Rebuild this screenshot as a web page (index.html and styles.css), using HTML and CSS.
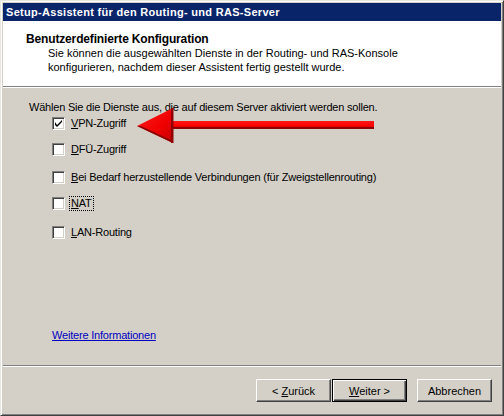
FILE: index.html
```html
<!DOCTYPE html>
<html lang="de">
<head>
<meta charset="utf-8">
<link rel="stylesheet" href="styles.css">
<title>Setup-Assistent</title>
</head>
<body>
<div class="window">
  <div class="titlebar">Setup-Assistent für den Routing- und RAS-Server</div>
  <div class="header">
    <div class="h-title">Benutzerdefinierte Konfiguration</div>
    <div class="h-desc">Sie können die ausgewählten Dienste in der Routing- und RAS-Konsole<br>konfigurieren, nachdem dieser Assistent fertig gestellt wurde.</div>
  </div>
  <div class="content">
    <div class="intro">Wählen Sie die Dienste aus, die auf diesem Server aktiviert werden sollen.</div>
    <div class="options">
      <div class="opt opt-vpn"><span class="cb checked"><svg viewBox="0 0 7 7" width="7" height="7"><path d="M0 2v3l2 2l5-5v-2l-5 5z" fill="#000"/></svg></span><span class="lbl"><u>V</u>PN-Zugriff</span></div>
      <div class="opt opt-dfu"><span class="cb"></span><span class="lbl"><u>D</u>FÜ-Zugriff</span></div>
      <div class="opt opt-bed"><span class="cb"></span><span class="lbl"><u>B</u>ei Bedarf herzustellende Verbindungen (für Zweigstellenrouting)</span></div>
      <div class="opt opt-nat"><span class="cb"></span><span class="lbl focus"><u>N</u>AT</span></div>
      <div class="opt opt-lan"><span class="cb"></span><span class="lbl"><u>L</u>AN-Routing</span></div>
    </div>
    <a class="more" href="#">Weitere Informationen</a>
    <svg class="arrow" width="240" height="40" viewBox="0 0 240 40">
      <defs>
        <linearGradient id="shaft" x1="0" y1="0" x2="0" y2="1">
          <stop offset="0" stop-color="#ff1a1a"/>
          <stop offset="0.6" stop-color="#ff0000"/>
          <stop offset="1" stop-color="#a00000"/>
        </linearGradient>
        <linearGradient id="head" x1="0" y1="0" x2="1" y2="1">
          <stop offset="0" stop-color="#ff2020"/>
          <stop offset="0.6" stop-color="#f00000"/>
          <stop offset="1" stop-color="#c00000"/>
        </linearGradient>
      </defs>
      <rect x="34" y="13" width="203" height="8" fill="url(#shaft)"/>
      <rect x="34" y="19" width="203" height="2" fill="#900000"/>
      <polygon points="0,18 36,0 36,35" fill="url(#head)"/>
      <polygon points="0,18 36,35 36,33 4,18" fill="#8a0000"/>
      <rect x="34" y="0" width="2.5" height="35" fill="#900000"/>
    </svg>
  </div>
  <div class="footer">
    <button class="btn"><span>&lt; <u>Z</u>urück</span></button>
    <button class="btn default"><span><u>W</u>eiter &gt;</span></button>
    <button class="btn cancel"><span>Abbrechen</span></button>
  </div>
</div>
</body>
</html>
```
FILE: styles.css
```css
* { box-sizing: border-box; }
html, body { margin: 0; padding: 0; background: #d4d0c8; }
body {
  font-family: "Liberation Sans", Arial, sans-serif;
  font-size: 11px;
  color: #000;
}
.window {
  width: 504px;
  height: 416px;
  display: flex;
  flex-direction: column;
  background: #d4d0c8;
  border: 1px solid;
  border-color: #e8e6e0 #404040 #404040 #e8e6e0;
  padding: 2px;
  box-shadow: inset 1px 1px 0 #fff, inset -1px -1px 0 #808080;
}
.titlebar {
  height: 18px;
  background: #0a246a;
  color: #fff;
  font-weight: bold;
  font-size: 11px;
  letter-spacing: 0.3px;
  line-height: 18px;
  padding-left: 3px;
  flex: none;
}
.header {
  height: 66px;
  background: #fff;
  border-bottom: 1px solid #808080;
  box-shadow: 0 1px 0 #fff;
  padding: 11px 0 0 23px;
  flex: none;
}
.h-title {
  font-weight: bold;
  font-size: 12px;
  letter-spacing: -0.15px;
  line-height: 14px;
}
.h-desc {
  margin-left: 22px;
  line-height: 14px;
}
.content {
  position: relative;
  flex: 1;
  padding: 13px 0 0 26px;
  margin-top: 1px;
  border-bottom: 1px solid #808080;
  box-shadow: 0 1px 0 #fff;
  display: flex;
  flex-direction: column;
  align-items: flex-start;
  letter-spacing: -0.2px;
}
.intro { line-height: 13px; }
.options {
  margin-left: 23px;
  display: flex;
  flex-direction: column;
}
.opt {
  display: flex;
  align-items: center;
  height: 13px;
}
.opt-vpn { margin-top: 3px; }
.opt-dfu { margin-top: 13px; }
.opt-bed { margin-top: 15px; }
.opt-nat { margin-top: 13px; }
.opt-lan { margin-top: 16px; }
.cb {
  width: 13px;
  height: 13px;
  background: #fff;
  border: 1px solid;
  border-color: #808080 #fff #fff #808080;
  box-shadow: inset 1px 1px 0 #404040, inset -1px -1px 0 #d4d0c8;
  display: flex;
  align-items: center;
  justify-content: center;
  flex: none;
}
.lbl {
  margin-left: 5px;
  line-height: 13px;
  padding: 0 1px;
}
.lbl.focus { outline: 1px dotted #000; outline-offset: 0; }
.more {
  margin-top: 90px;
  margin-left: 23px;
  color: #0000c0;
  line-height: 13px;
}
.arrow {
  position: absolute;
  left: 134px;
  top: 20px;
}
.footer {
  height: 46px;
  margin-top: 1px;
  display: flex;
  justify-content: flex-end;
  align-items: flex-start;
  padding: 12px 9px 0 0;
  flex: none;
}
.btn {
  width: 75px;
  height: 23px;
  font: inherit;
  color: #000;
  background: #d4d0c8;
  border: 1px solid;
  border-color: #fff #404040 #404040 #fff;
  box-shadow: inset -1px -1px 0 #808080;
  padding: 0;
  margin: 0;
}
.btn.default {
  border: 1px solid #000;
  box-shadow: inset 1px 1px 0 #fff, inset -1px -1px 0 #404040, inset -2px -2px 0 #808080;
  margin-left: 1px;
}
.btn.cancel { margin-left: 10px; }
```
